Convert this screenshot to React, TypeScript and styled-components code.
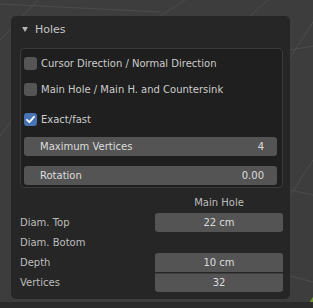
import React from "react";
import styled, { createGlobalStyle } from "styled-components";

const Global = createGlobalStyle`
  html, body { margin: 0; padding: 0; }
  body {
    width: 313px;
    height: 308px;
    overflow: hidden;
    background: #3d3d3d;
    font-family: "DejaVu Sans", "Liberation Sans", sans-serif;
    font-size: 10px;
    color: #cccccc;
  }
`;

const Viewport = styled.div`
  position: relative;
  width: 313px;
  height: 308px;
  padding: 16px 0 0 11px;
  box-sizing: border-box;
`;

const Grid = styled.svg`
  position: absolute;
  left: 0;
  top: 0;
  width: 313px;
  height: 308px;
`;

const BottomBar = styled.div`
  position: absolute;
  left: 0;
  right: 0;
  bottom: 0;
  height: 6px;
  background: #2b2b2b;
`;

const Panel = styled.div`
  position: relative;
  width: 279px;
  height: 283px;
  box-sizing: border-box;
  background: #262626;
  border-radius: 5px;
  padding: 0 7px 0 9px;
  display: flex;
  flex-direction: column;
`;

const Header = styled.div`
  height: 26px;
  display: flex;
  align-items: center;
  gap: 7px;
  padding-left: 2px;
  font-size: 11px;
  color: #c4c4c4;
`;

const Triangle = styled.span`
  width: 0;
  height: 0;
  border-left: 3px solid transparent;
  border-right: 3px solid transparent;
  border-top: 5px solid #b4b4b4;
  margin-top: 1px;
`;

const Box = styled.div`
  margin-top: 6px;
  height: 140px;
  box-sizing: border-box;
  background: #1f1f1f;
  border: 1px solid #3b3b3b;
  border-radius: 4px;
  padding: 8px 5px 0 3px;
  display: flex;
  flex-direction: column;
`;

const CheckRow = styled.label<{ $gap: number }>`
  display: flex;
  align-items: center;
  gap: 4px;
  height: 13px;
  margin-bottom: ${(p) => p.$gap}px;
`;

const Check = styled.span<{ $on?: boolean }>`
  width: 13px;
  height: 13px;
  border-radius: 3px;
  background: ${(p) => (p.$on ? "#4772b3" : "#555555")};
  display: flex;
  align-items: center;
  justify-content: center;
`;

const Field = styled.div<{ $gap?: number }>`
  height: 19px;
  box-sizing: border-box;
  background: #545454;
  border-radius: 3px;
  display: flex;
  align-items: center;
  justify-content: space-between;
  padding: 0 13px 0 16px;
  margin-bottom: ${(p) => p.$gap ?? 0}px;
  color: #dddddd;
`;

const ColTitle = styled.div`
  height: 20px;
  display: flex;
  align-items: center;
  justify-content: center;
  padding-left: 135px;
  color: #bdbdbd;
  margin-top: 4px;
`;

const PropRow = styled.div`
  display: grid;
  grid-template-columns: 135px 128px;
  align-items: center;
  height: 20px;
  color: #bdbdbd;
`;

const Value = styled.div<{ $pos?: "single" | "top" | "bottom" }>`
  height: 19px;
  box-sizing: border-box;
  background: #545454;
  color: #dddddd;
  display: flex;
  align-items: center;
  justify-content: center;
  border-radius: ${(p) =>
    p.$pos === "top" ? "3px 3px 0 0" : p.$pos === "bottom" ? "0 0 3px 3px" : "3px"};
  border-top: ${(p) => (p.$pos === "bottom" ? "1px solid #3e3e3e" : "none")};
`;

function Tick() {
  return (
    <svg width="11" height="11" viewBox="0 0 11 11">
      <path d="M2 5.8 L4.4 8.2 L9 2.8" fill="none" stroke="#ffffff" strokeWidth="1.8" strokeLinecap="round" strokeLinejoin="round" />
    </svg>
  );
}

const props = [
  { label: "Diam. Top", value: "22 cm", pos: "single" as const },
  { label: "Diam. Botom", value: null, pos: "single" as const },
  { label: "Depth", value: "10 cm", pos: "top" as const },
  { label: "Vertices", value: "32", pos: "bottom" as const },
];

export default function App() {
  return (
    <>
      <Global />
      <Viewport>
        <Grid viewBox="0 0 313 308">
          <g stroke="#4d4d4d" strokeWidth="1" fill="none">
            <line x1="38" y1="0" x2="0" y2="40" />
            <line x1="0" y1="4" x2="160" y2="12" />
            <line x1="185" y1="0" x2="160" y2="16" />
            <line x1="268" y1="0" x2="250" y2="16" />
            <line x1="290" y1="50" x2="313" y2="46" />
            <line x1="313" y1="22" x2="290" y2="58" />
            <line x1="313" y1="160" x2="290" y2="196" />
            <line x1="290" y1="190" x2="313" y2="195" />
            <line x1="290" y1="276" x2="313" y2="282" />
            <line x1="12" y1="120" x2="0" y2="136" />
          </g>
          <path d="M309 303 L313 297 L313 303 Z" fill="#6a9a2a" />
        </Grid>
        <BottomBar />
        <Panel>
          <Header>
            <Triangle />
            <span>Holes</span>
          </Header>
          <Box>
            <CheckRow $gap={13}>
              <Check />
              <span>Cursor Direction / Normal Direction</span>
            </CheckRow>
            <CheckRow $gap={17}>
              <Check />
              <span>Main Hole / Main H. and Countersink</span>
            </CheckRow>
            <CheckRow $gap={11}>
              <Check $on>
                <Tick />
              </Check>
              <span>Exact/fast</span>
            </CheckRow>
            <Field $gap={10}>
              <span>Maximum Vertices</span>
              <span>4</span>
            </Field>
            <Field>
              <span>Rotation</span>
              <span>0.00</span>
            </Field>
          </Box>
          <ColTitle>Main Hole</ColTitle>
          {props.map((p) => (
            <PropRow key={p.label}>
              <span>{p.label}</span>
              {p.value ? <Value $pos={p.pos}>{p.value}</Value> : <span />}
            </PropRow>
          ))}
        </Panel>
      </Viewport>
    </>
  );
}
